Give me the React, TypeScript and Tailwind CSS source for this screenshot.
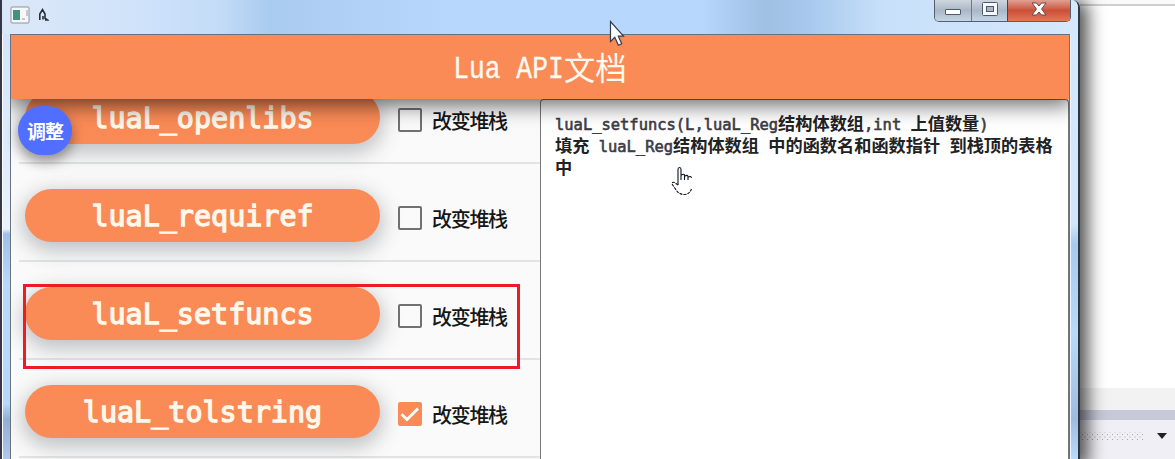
import React from "react";

const mono = "font-['DejaVu_Sans_Mono',monospace]";
const cjk = "font-['Noto_Sans_CJK_SC',sans-serif]";

const rows = [
  { name: "luaL_openlibs", checked: false },
  { name: "luaL_requiref", checked: false },
  { name: "luaL_setfuncs", checked: false },
  { name: "luaL_tolstring", checked: true },
];

function Checkbox({ checked }: { checked: boolean }) {
  return checked ? (
    <span className="flex h-6 w-6 items-center justify-center rounded-[2px] bg-[#fb8b56]">
      <svg width="20" height="16" viewBox="0 0 20 16" fill="none" stroke="#fff" strokeWidth="2.8">
        <path d="M1.5 8.2 7 13.5 18 2.5" />
      </svg>
    </span>
  ) : (
    <span className="h-6 w-6 rounded-[2px] border-2 border-[#717171]" />
  );
}

function ApiRow({ name, checked }: { name: string; checked: boolean }) {
  return (
    <div className="ml-2 flex h-[98px] shrink-0 items-start border-b-2 border-[#e2e3e4] pl-[6px] pt-[25px]">
      <div
        className={`flex h-[53px] w-[355px] shrink-0 items-center justify-center rounded-full bg-[#fb8b56] pt-[3px] text-[28.4px] leading-none text-[#fff8ec] shadow-[0_6px_20px_3px_rgba(55,60,70,0.3)] ${mono}`}
      >
        <span className="[-webkit-text-stroke:1.3px_#fff8ec]">{name}</span>
      </div>
      <div className="ml-[18px] mt-[17px] flex items-center">
        <Checkbox checked={checked} />
        <span className={`ml-[10px] whitespace-nowrap pt-px text-[20px] font-medium leading-[22px] tracking-[-1.3px] text-[#161616] ${cjk}`}>
          改变堆栈
        </span>
      </div>
    </div>
  );
}

function C({ children }: { children: React.ReactNode }) {
  return <span className={`text-[17.2px] font-bold leading-none text-[#222] ${cjk}`}>{children}</span>;
}

function M({ children }: { children: React.ReactNode }) {
  return <span className="whitespace-pre [-webkit-text-stroke:0.6px_#3c3c46]">{children}</span>;
}

function WindowButtons() {
  return (
    <div className="absolute left-[932px] top-0 flex h-[22px] w-[137px] overflow-hidden rounded-b-[5px] border border-t-0 border-[#52616f]">
      <div className="flex w-[37px] justify-center border-r border-[#6d7b89] bg-linear-to-b from-[#ced6df] via-[#aab7c6] to-[#c5d5e5] pt-[9px]">
        <span className="h-[6px] w-4 rounded-[1px] border border-[#505a66] bg-white" />
      </div>
      <div className="flex w-[36px] justify-center border-r border-[#603b38] bg-linear-to-b from-[#ced6df] via-[#aab7c6] to-[#c5d5e5] pt-[2px]">
        <svg width="16" height="14" viewBox="0 0 16 14">
          <rect x=".5" y=".5" width="15" height="13" rx="1" fill="#f7f8fa" stroke="#505a66" />
          <rect x="4.5" y="4.5" width="7" height="5" fill="#aab7c6" stroke="#505a66" />
        </svg>
      </div>
      <div className="flex flex-1 justify-center bg-linear-to-b from-[#dfa092] via-[#ca5039] via-50% to-[#e47654] pt-[2px]">
        <svg width="16" height="14" viewBox="0 0 16 14">
          <path d="M1 1h4.5L8 4l2.5-3H15l-4.400 6 4.400 6h-4.500L8 10l-2.500 3H1l4.400-6z" fill="#fff" stroke="#65474a" strokeWidth="1" />
        </svg>
      </div>
    </div>
  );
}

function TitleBar() {
  return (
    <div className="flex h-[34px] shrink-0 items-start bg-[linear-gradient(90deg,#dbe8f8_0%,#d0e3fa_12%,#c4dcf8_20%,#a9cbef_25%,#b0d1f5_32%,#b7d7fd_42%,#b7d7fd_65%,#9fbfe3_71%,#a8c9ee_75%,#c8e0fa_82%,#d5e8fc_100%)] pl-[8px] pt-[6px]">
      <svg width="20" height="18" viewBox="0 0 20 18">
        <rect x="1" y="1" width="18" height="16" rx="1" fill="#f5f7f8" stroke="#8b959e" />
        <rect x="3" y="4" width="7" height="10" fill="#438f80" />
        <path d="M17 4v6M12 13h3" stroke="#929aa0" />
      </svg>
      <svg className="ml-[8px] mt-px" width="11" height="15" viewBox="0 0 11 15" fill="none" stroke="#27303a" strokeWidth="1.6">
        <path d="M1.800 13V7L4.500 2.500 7 7v4M5 9v3.500M6.500 11l3 2H7" />
      </svg>
    </div>
  );
}

export default function App() {
  return (
    <div className="relative flex h-[459px] w-[1175px] overflow-hidden bg-white">
      <div className="relative z-10 flex h-full w-[1080px] shrink-0 flex-col overflow-hidden rounded-tr-[8px] border-l-2 border-r-2 border-l-[#343848] border-r-[#2d3743] bg-[#cfe4fa] shadow-[4px_4px_17px_4px_rgba(0,0,0,0.68)]">
        <TitleBar />
        <WindowButtons />
        <div className="flex min-h-0 flex-1">
          <div className="w-[8px] shrink-0 border-l border-white bg-[linear-gradient(#d2e5fb_0px,#e1edfc_140px,#eaf2fd_195px,#9fbfe8_200px,#b8d9fb_250px,#b7d8fb_370px,#91afd2_385px,#b0c8ec_425px)]" />
          <div className="flex min-w-0 flex-1 flex-col border border-b-0 border-[#68737f] bg-[#fafafa]">
            <header className="relative z-10 flex h-16 shrink-0 items-center justify-center bg-[#fb8b56] text-[#fffaf0] shadow-[0_4px_20px_2px_rgba(0,0,0,0.6)] [clip-path:inset(0_0_-40px_0)]">
              <span className="flex items-start whitespace-pre">
                <span className="scale-y-[1.18] pt-[3px] font-['Liberation_Mono',monospace] text-[26.3px] leading-10 [-webkit-text-stroke:0.3px_#fffaf0]">Lua API</span>
                <span className={`text-[31.5px] font-normal leading-10 ${cjk}`}>文档</span>
              </span>
            </header>
            <main className="flex min-h-0 flex-1">
              <section className="w-[529px] shrink-0 overflow-hidden">
                <div className="-mt-[33px] flex flex-col">
                  {rows.map((row) => (
                    <ApiRow key={row.name} {...row} />
                  ))}
                </div>
              </section>
              <section className={`min-w-0 flex-1 rounded-t-[4px] border border-b-0 border-[#777] bg-white pl-[14px] pt-[14px] text-[15.45px] leading-[22px] text-[#3c3c46] ${mono}`}>
                <p className="h-[22px] whitespace-pre"><M>luaL_setfuncs(L,luaL_Reg</M><C>结构体数组</C><M>,int </M><C>上值数量</C><M>)</M></p>
                <p className="h-[22px] whitespace-pre"><C>填充</C><M> luaL_Reg</M><C>结构体数组</C><M> </M><C>中的函数名和函数指针</C><M> </M><C>到栈顶的表格</C></p>
                <p className="h-[22px]"><C>中</C></p>
              </section>
            </main>
          </div>
          <div className="w-[8px] shrink-0 border-l border-[#e8f4ff] bg-[linear-gradient(#d5e8fc_0px,#d2e6fb_190px,#a7c9ed_210px,#b8daf9_300px,#9fbce0_385px,#b9dafb_425px)]" />
        </div>
      </div>

      <div className="flex min-w-0 flex-1 flex-col bg-white">
        <div className="h-[6px] border-b-2 border-[#cfcfd1] bg-[#fafafa]" />
        <div className="h-[382px]" />
        <div className="h-[22px] bg-[#f2f2f3]" />
        <div className="h-[10px] bg-[#c7c8d8]" />
        <div className="flex flex-1 items-start bg-[#efeff5] pt-[12px]">
          <span className="h-[8px] w-[64px] bg-[radial-gradient(circle,#a6a6ae_0.7px,transparent_1px),radial-gradient(circle,#a6a6ae_0.7px,transparent_1px)] bg-size-[5px_5px] bg-position-[0_0,2.5px_2.5px]" />
          <svg className="ml-[13px] mt-px" width="10" height="6" viewBox="0 0 10 6"><path d="M0 0h10L5 6z" fill="#202027" /></svg>
        </div>
      </div>

      <div className={`absolute left-[18px] top-[106px] z-20 flex h-[49px] w-[54px] items-center justify-center rounded-full bg-[#506eff] pt-px text-[19px] font-bold tracking-[-1px] text-white shadow-[0_6px_12px_1px_rgba(40,40,40,0.42)] ${cjk}`}>
        调整
      </div>
      <div className="absolute left-[23px] top-[284px] z-20 h-[85px] w-[497px] border-[3px] border-[#ed1c24]" />
      <svg className="absolute left-[609px] top-[20px] z-20" width="17" height="28" viewBox="0 0 17 28">
        <path d="M1.500 1.500v20l4.300-4.200 3.600 8 3.300-1.600-3.400-7.500h5.200z" fill="#fff" stroke="#2f3d50" strokeWidth="1.2" />
      </svg>
      <svg className="absolute left-[671px] top-[166px] z-20" width="22" height="30" viewBox="0 0 22 30" fill="none" stroke="#111320" strokeWidth="1.1">
        <path d="M7 19V3.500Q7 1.500 8.500 1.500T10 3.500V14M10.500 9Q13 7.500 13.500 9v5M14 10Q16.500 8.500 17 10.500V14M17.500 11Q20 9.500 20.500 12" />
        <path d="M7 19 3.500 16.500Q1 15.500 1 18L4.500 23Q7 28 12.500 28.500 18 29 20.500 23" strokeDasharray="3 1" />
      </svg>
    </div>
  );
}
